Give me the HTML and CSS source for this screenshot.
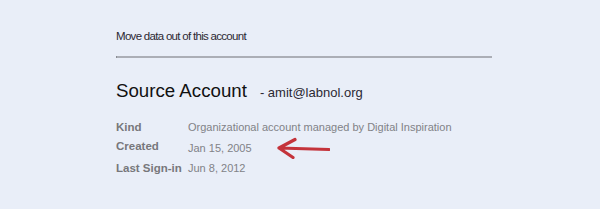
FILE: index.html
```html
<!DOCTYPE html>
<html lang="en">
<head>
    <meta charset="UTF-8">
    <title>Move data out of this account</title>
    <link rel="stylesheet" href="styles.css">
</head>
<body>
    <div class="panel">
        <p class="title">Move data out of this account</p>
        <div class="rule"></div>
        <div class="account-head">
            <h1>Source Account</h1>
            <span class="email">- amit@labnol.org</span>
        </div>
        <div class="details">
            <div class="label">Kind</div>
            <div class="value">Organizational account managed by Digital Inspiration</div>
            <div class="label">Created</div>
            <div class="value">Jan 15, 2005
                <svg class="arrow" width="54" height="22" viewBox="0 0 54 22">
                    <path d="M3 11 L53 12.5 M3 11 L19 2.5 M3 11 L17 20.5" fill="none" stroke="#c4333b" stroke-width="3.2" stroke-linecap="round" stroke-linejoin="round"/>
                </svg>
            </div>
            <div class="label">Last Sign-in</div>
            <div class="value">Jun 8, 2012</div>
        </div>
    </div>
</body>
</html>
```

FILE: styles.css
```css
* {
    margin: 0;
    padding: 0;
    box-sizing: border-box;
}

body {
    background-color: #e9eef8;
    font-family: 'Liberation Sans', Arial, sans-serif;
    height: 209px;
    overflow: hidden;
}

.panel {
    width: 376px;
    margin-left: 116px;
    padding-top: 29px;
}

.title {
    font-size: 11.5px;
    line-height: 14px;
    color: #2b2833;
    letter-spacing: -0.7px;
}

.rule {
    margin-top: 13px;
    height: 2px;
    background-color: #abaeb6;
    border-left: 1px solid #8a8d94;
}

.account-head {
    display: flex;
    align-items: baseline;
    margin-top: 22px;
}

h1 {
    font-size: 18.7px;
    line-height: 22px;
    font-weight: normal;
    color: #111;
}

.email {
    font-size: 13px;
    margin-left: 13px;
    color: #2b2833;
}

.details {
    display: grid;
    grid-template-columns: 72px 1fr;
    margin-top: 16px;
    font-size: 11px;
    line-height: 19px;
}

.label {
    font-size: 11.5px;
    font-weight: bold;
    color: #77777b;
}

.value {
    color: #818287;
    white-space: nowrap;
}

.arrow {
    vertical-align: -7px;
    margin-left: 21px;
}
```
